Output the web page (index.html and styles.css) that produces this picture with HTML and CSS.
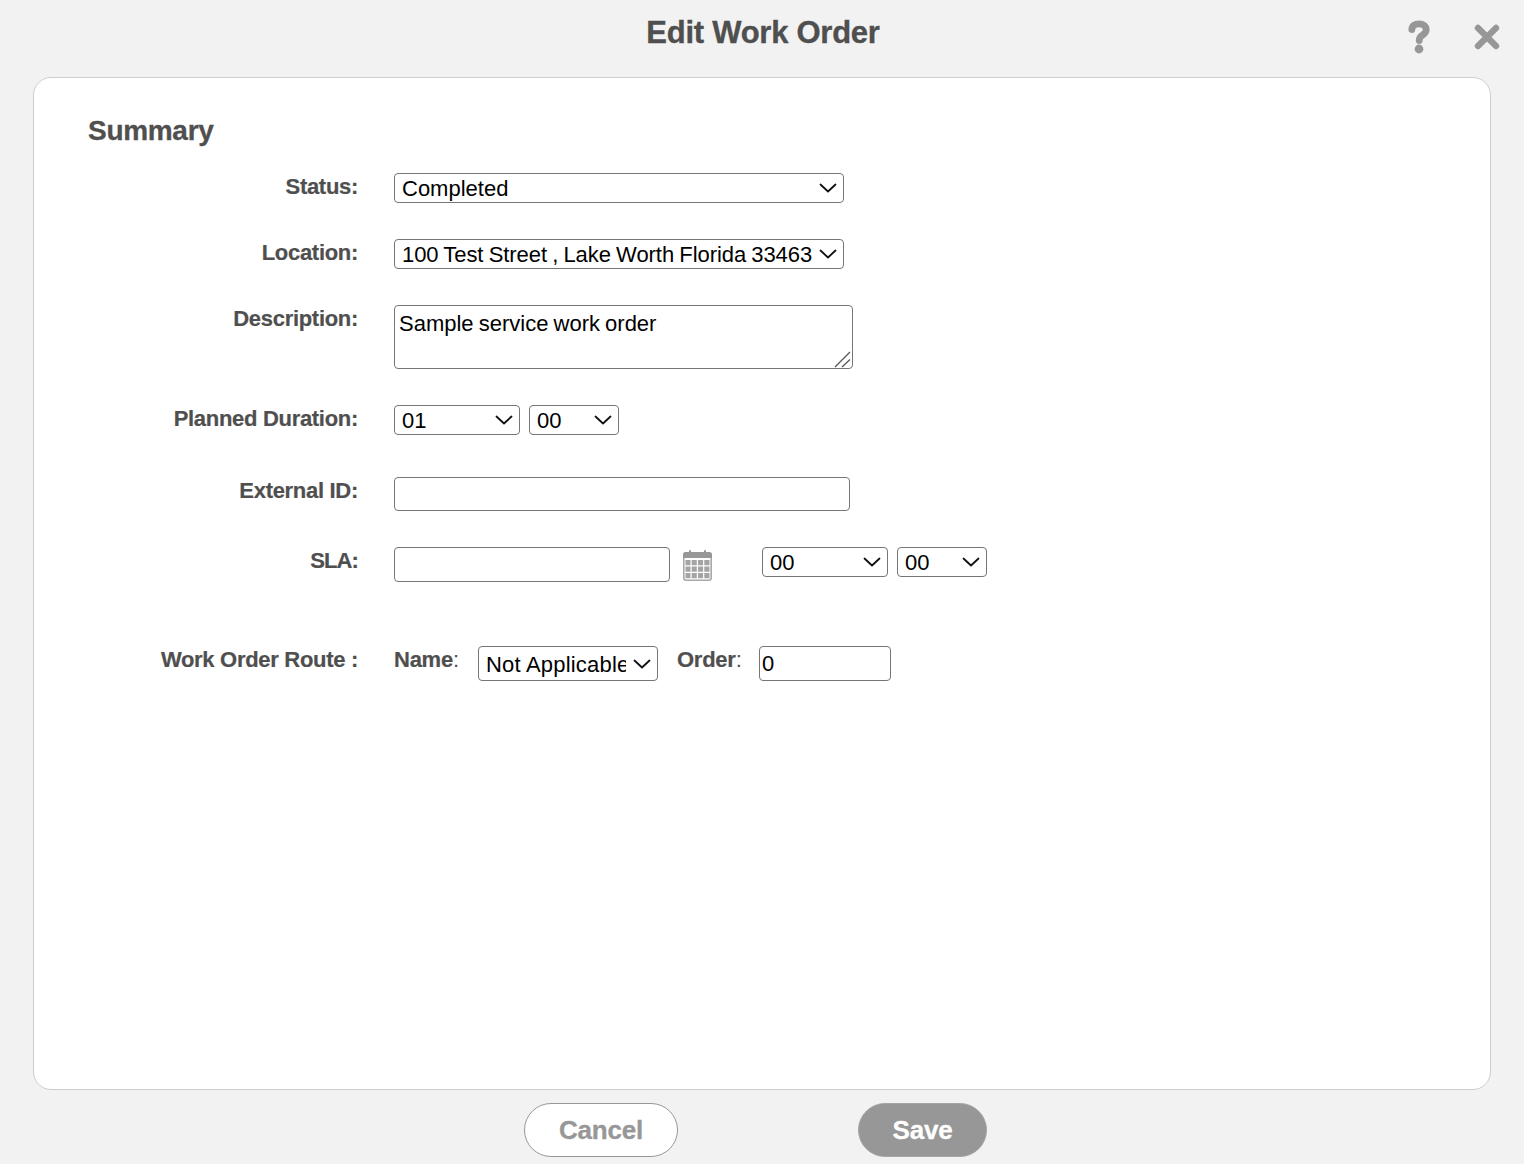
FILE: index.html
```html
<!DOCTYPE html>
<html lang="en">
<head>
<meta charset="utf-8">
<title>Edit Work Order</title>
<link rel="stylesheet" href="styles.css">
</head>
<body>
<header class="top">
  <span></span>
  <h1 class="title">Edit Work Order</h1>
  <div class="top-icons">
    <svg class="icon-help" width="22" height="34" viewBox="0 0 22 34" aria-label="Help"><path d="M3.800 9.500C4 5.800 7 3.800 11 3.800s7.200 2.400 7.200 6c0 3-2 4.300-4 5.600-1.900 1.200-3 2.200-3 5.200" fill="none" stroke="#979797" stroke-width="6.800" stroke-linecap="round"/><circle cx="11" cy="29" r="4.400" fill="#979797"/></svg>
    <svg class="icon-close" width="26" height="26" viewBox="0 0 26 26" aria-label="Close"><path d="M4 4l18 18M22 4L4 22" fill="none" stroke="#979797" stroke-width="6.400" stroke-linecap="round"/></svg>
  </div>
</header>
<main class="card">
  <h2 class="section">Summary</h2>
  <div class="form">
    <div class="row row-status">
      <label class="label">Status:</label>
      <div class="controls">
        <div class="sel sel-wide"><select class="field"><option>Completed</option></select><svg class="chev" width="18" height="10" viewBox="0 0 18 10"><path d="M1.500 1.500L9 8.500l7.500-7" fill="none" stroke="#111" stroke-width="1.800" stroke-linecap="round" stroke-linejoin="round"/></svg></div>
      </div>
    </div>
    <div class="row">
      <label class="label">Location:</label>
      <div class="controls">
        <div class="sel sel-wide"><select class="field field-location"><option>100 Test Street , Lake Worth Florida 33463</option></select><svg class="chev" width="18" height="10" viewBox="0 0 18 10"><path d="M1.500 1.500L9 8.500l7.500-7" fill="none" stroke="#111" stroke-width="1.800" stroke-linecap="round" stroke-linejoin="round"/></svg></div>
      </div>
    </div>
    <div class="row">
      <label class="label">Description:</label>
      <div class="controls">
        <div class="area-wrap">
          <textarea class="area">Sample service work order</textarea>
          <svg class="grip" width="18" height="17" viewBox="0 0 18 17"><path d="M1 16L16 1M8 16l8-7.500" fill="none" stroke="#555" stroke-width="1.300"/></svg>
        </div>
      </div>
    </div>
    <div class="row row-planned">
      <label class="label">Planned Duration:</label>
      <div class="controls gap9">
        <div class="sel sel-hour"><select class="field"><option>01</option></select><svg class="chev" width="18" height="10" viewBox="0 0 18 10"><path d="M1.500 1.500L9 8.500l7.500-7" fill="none" stroke="#111" stroke-width="1.800" stroke-linecap="round" stroke-linejoin="round"/></svg></div>
        <div class="sel sel-min"><select class="field"><option>00</option></select><svg class="chev" width="18" height="10" viewBox="0 0 18 10"><path d="M1.500 1.500L9 8.500l7.500-7" fill="none" stroke="#111" stroke-width="1.800" stroke-linecap="round" stroke-linejoin="round"/></svg></div>
      </div>
    </div>
    <div class="row">
      <label class="label">External ID:</label>
      <div class="controls">
        <input class="text text-ext" type="text">
      </div>
    </div>
    <div class="row row-sla">
      <label class="label label-sla">SLA:</label>
      <div class="controls">
        <input class="text text-sla" type="text">
        <svg class="cal" width="29" height="31" viewBox="0 0 29 31" aria-label="Calendar"><rect x="0.800" y="2.800" width="27.400" height="27.400" rx="2.500" fill="#fff" stroke="#a8a8a8" stroke-width="1.600"/><path d="M3 2h23a3 3 0 0 1 3 3v3H0V5a3 3 0 0 1 3-3z" fill="#979797"/><rect x="6" y="0" width="2" height="5" rx="1" fill="#979797"/><rect x="21" y="0" width="2" height="5" rx="1" fill="#979797"/><path d="M2.500 10h5v5.300h-5zM8.700 10h5.100v5.300H8.700zM15 10h5.100v5.300H15zM21.300 10h5.200v5.300h-5.200zM2.500 16.500h5v5.300h-5zM8.700 16.500h5.100v5.300H8.700zM15 16.500h5.100v5.300H15zM21.300 16.500h5.200v5.300h-5.200zM2.500 23h5v5.300h-5zM8.700 23h5.100v5.300H8.700zM15 23h5.100v5.300H15zM21.300 23h5.200v5.300h-5.200z" fill="#a4a4a4"/></svg>
        <div class="gap9 sla-time">
          <div class="sel sel-hour"><select class="field"><option>00</option></select><svg class="chev" width="18" height="10" viewBox="0 0 18 10"><path d="M1.500 1.500L9 8.500l7.500-7" fill="none" stroke="#111" stroke-width="1.800" stroke-linecap="round" stroke-linejoin="round"/></svg></div>
          <div class="sel sel-min"><select class="field"><option>00</option></select><svg class="chev" width="18" height="10" viewBox="0 0 18 10"><path d="M1.500 1.500L9 8.500l7.500-7" fill="none" stroke="#111" stroke-width="1.800" stroke-linecap="round" stroke-linejoin="round"/></svg></div>
        </div>
      </div>
    </div>
    <div class="row">
      <label class="label">Work Order Route :</label>
      <div class="controls">
        <span class="inline-label inline-name"><b>Name</b>:</span>
        <div class="sel sel-route"><select class="field field-tall"><option>Not Applicable</option></select><svg class="chev" width="18" height="10" viewBox="0 0 18 10"><path d="M1.500 1.500L9 8.500l7.500-7" fill="none" stroke="#111" stroke-width="1.800" stroke-linecap="round" stroke-linejoin="round"/></svg></div>
        <span class="inline-label inline-order"><b>Order</b>:</span>
        <input class="text text-order" type="text" value="0">
      </div>
    </div>
  </div>
</main>
<footer class="actions">
  <button class="btn btn-cancel" type="button">Cancel</button>
  <button class="btn btn-save" type="button">Save</button>
</footer>
</body>
</html>
```
FILE: styles.css
```css
* { box-sizing: border-box; }
html, body { margin: 0; height: 1164px; overflow: hidden; }
body {
  background: #f2f2f2;
  font-family: "Liberation Sans", Arial, sans-serif;
  color: #4f4f4f;
}
.top {
  height: 77px;
  display: grid;
  grid-template-columns: 1fr auto 1fr;
}
.title {
  margin: 0;
  padding: 15px 0 0 2px;
  font-size: 31px;
  line-height: 36px;
  font-weight: 700;
  letter-spacing: -0.25px;
  color: #4f4f4f;
  -webkit-text-stroke: 0.35px #4f4f4f;
}
.top-icons { display: flex; justify-content: flex-end; align-items: flex-start; padding-right: 24px; }
.icon-help { margin-top: 20px; }
.icon-close { margin: 24px 0 0 44px; }
.card {
  width: 1458px;
  height: 1013px;
  margin-left: 33px;
  background: #fff;
  border: 1px solid #cdcdcd;
  border-radius: 18px;
  padding: 36px 0 0 54px;
}
.section {
  margin: 0;
  font-size: 28px;
  line-height: 34px;
  font-weight: 700;
  letter-spacing: -0.3px;
  color: #4f4f4f;
  -webkit-text-stroke: 0.3px #4f4f4f;
}
.form { margin-top: 25px; display: flex; flex-direction: column; gap: 36px; }
.row { display: flex; align-items: flex-start; }
.row-planned { margin-bottom: 6px; }
.row-sla { margin-bottom: 28px; }
.label {
  width: 270px;
  flex: none;
  padding-top: 1px;
  text-align: right;
  font-size: 22px;
  line-height: 26px;
  font-weight: 700;
  letter-spacing: -0.3px;
  color: #4f4f4f;
  -webkit-text-stroke: 0.2px #4f4f4f;
}
.label-sla { letter-spacing: -0.9px; }
.controls { display: flex; align-items: flex-start; margin-left: 36px; }
.gap9 { display: flex; gap: 9px; }
.sel { position: relative; flex: none; }
.sel-wide { width: 450px; }
.sel-hour { width: 126px; }
.sel-min { width: 90px; }
.sel-route { width: 180px; }
.field {
  display: block;
  width: 100%;
  height: 30px;
  appearance: none;
  -webkit-appearance: none;
  background: #fff;
  border: 1px solid #767676;
  border-radius: 4px;
  padding: 1px 31px 0 7px;
  font: 22px/28px "Liberation Sans", Arial, sans-serif;
  color: #000;
}
.field-location { word-spacing: -0.8px; letter-spacing: -0.07px; }
.field-tall { height: 35px; padding-top: 2px; letter-spacing: 0.2px; }
.chev { position: absolute; right: 7px; top: 50%; margin-top: -5px; pointer-events: none; }
.area-wrap { position: relative; }
.area {
  display: block;
  width: 459px;
  height: 64px;
  border: 1px solid #767676;
  border-radius: 4px;
  padding: 3px 4px;
  background: #fff;
  resize: none;
  font: 22px/29px "Liberation Sans", Arial, sans-serif;
  word-spacing: -1px;
  color: #000;
}
.grip { position: absolute; right: 1px; bottom: 1px; pointer-events: none; }
.text {
  display: block;
  height: 34px;
  background: #fff;
  border: 1px solid #767676;
  border-radius: 4px;
  padding: 0 2px;
  font: 22px "Liberation Sans", Arial, sans-serif;
  color: #000;
}
.text-ext { width: 456px; }
.text-sla { width: 276px; height: 35px; }
.cal { margin: 3px 0 0 13px; flex: none; }
.sla-time { margin-left: 50px; }
.inline-label {
  padding-top: 1px;
  font-size: 22px;
  line-height: 26px;
  letter-spacing: -0.25px;
  color: #4f4f4f;
  font-weight: 400;
}
.inline-label b { -webkit-text-stroke: 0.2px #4f4f4f; }
.inline-name { width: 84px; }
.inline-order { width: 82px; margin-left: 19px; }
.text-order { width: 132px; height: 35px; }
.actions { display: flex; padding: 13px 0 0 524px; gap: 180px; }
.btn {
  height: 54px;
  border-radius: 27px;
  font: 700 26px "Liberation Sans", Arial, sans-serif;
  letter-spacing: -0.2px;
  padding: 0;
  -webkit-text-stroke: 0.3px currentColor;
}
.btn-cancel { width: 154px; background: #fff; border: 1px solid #979797; color: #979797; }
.btn-save { width: 129px; background: #979797; border: 1px solid #a5a5a5; color: #fff; }
```
